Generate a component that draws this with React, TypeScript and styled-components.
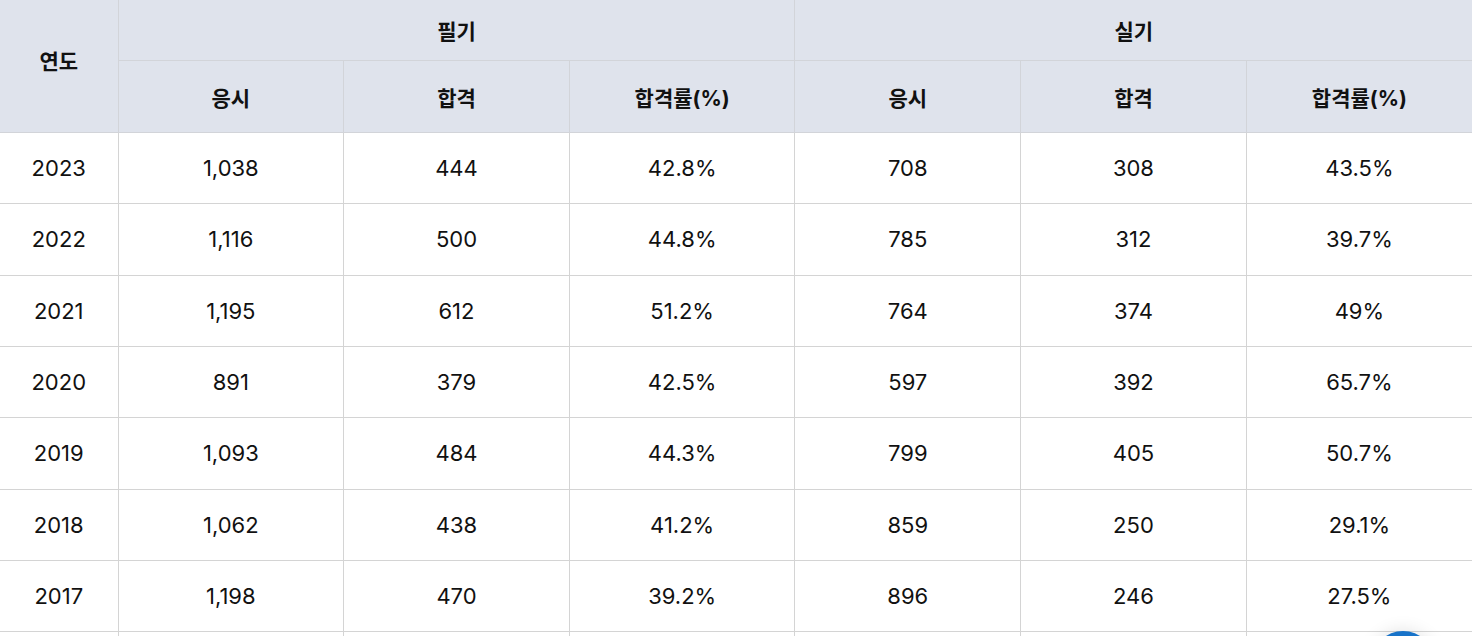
import React from "react";
import styled, { createGlobalStyle } from "styled-components";

const Global = createGlobalStyle`
  html, body { margin: 0; padding: 0; background: #ffffff; }
  body { font-family: Inter, "Noto Sans CJK KR", "Noto Sans", sans-serif; color: #111111; overflow: hidden; }
`;

const Table = styled.table`
  width: 1472px;
  border-collapse: collapse;
  table-layout: fixed;
`;

const HeadCell = styled.th<{ $h: number; $top?: boolean; $lift?: number }>`
  background: #dfe3ec;
  height: ${(p) => p.$h}px;
  padding: 0 0 ${(p) => p.$lift ?? 0}px 0;
  font-size: 21px;
  font-weight: 700;
  text-align: center;
  vertical-align: middle;
  border: 1px solid #d2d4d9;
  ${(p) => (p.$top ? "border-top: none;" : "")}
  &:first-child { border-left: none; }
  &:last-child { border-right: none; }
`;

const Cell = styled.td`
  height: 70.33px;
  padding: 0;
  font-size: 22px;
  font-weight: 400;
  text-align: center;
  vertical-align: middle;
  border: 1px solid #d4d4d4;
  &:first-child { border-left: none; }
  &:last-child { border-right: none; }
`;

const Fab = styled.div`
  position: fixed;
  left: 1372px;
  top: 631px;
  width: 62px;
  height: 62px;
  border-radius: 50%;
  background: #1873c9;
  box-shadow: 0 0 18px rgba(0, 0, 0, 0.12);
`;

const rows = [
  ["2023", "1,038", "444", "42.8%", "708", "308", "43.5%"],
  ["2022", "1,116", "500", "44.8%", "785", "312", "39.7%"],
  ["2021", "1,195", "612", "51.2%", "764", "374", "49%"],
  ["2020", "891", "379", "42.5%", "597", "392", "65.7%"],
  ["2019", "1,093", "484", "44.3%", "799", "405", "50.7%"],
  ["2018", "1,062", "438", "41.2%", "859", "250", "29.1%"],
  ["2017", "1,198", "470", "39.2%", "896", "246", "27.5%"],
  ["", "", "", "", "", "", ""],
];

export default function App() {
  return (
    <>
      <Global />
      <Table>
        <colgroup>
          <col style={{ width: 118 }} />
          <col />
          <col />
          <col />
          <col />
          <col />
          <col />
        </colgroup>
        <thead>
          <tr>
            <HeadCell $h={60} $top $lift={12} rowSpan={2}>연도</HeadCell>
            <HeadCell $h={60} $top colSpan={3}>필기</HeadCell>
            <HeadCell $h={60} $top colSpan={3}>실기</HeadCell>
          </tr>
          <tr>
            <HeadCell $h={71}>응시</HeadCell>
            <HeadCell $h={71}>합격</HeadCell>
            <HeadCell $h={71}>합격률(%)</HeadCell>
            <HeadCell $h={71}>응시</HeadCell>
            <HeadCell $h={71}>합격</HeadCell>
            <HeadCell $h={71}>합격률(%)</HeadCell>
          </tr>
        </thead>
        <tbody>
          {rows.map((r, ri) => (
            <tr key={ri}>
              {r.map((c, i) => (
                <Cell key={i}>{c}</Cell>
              ))}
            </tr>
          ))}
        </tbody>
      </Table>
      <Fab />
    </>
  );
}
